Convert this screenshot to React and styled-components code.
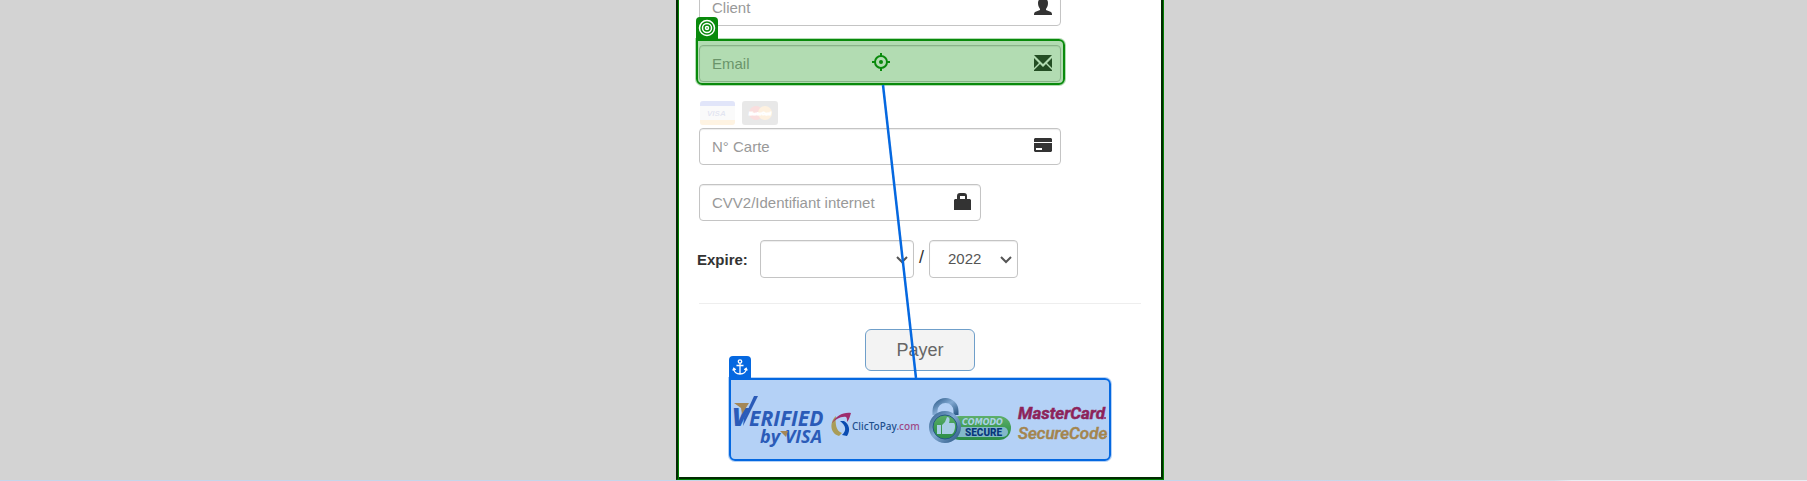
import React from "react";
import styled, { createGlobalStyle, css } from "styled-components";
import { Target } from "lucide-react";

const GREEN = "#098a0c";
const BLUE = "#0568e0";

const GlobalStyle = createGlobalStyle`
  *, *::before, *::after { box-sizing: border-box; }
  body {
    margin: 0;
    background: #d3d3d3;
    font-family: "Liberation Sans", Arial, sans-serif;
    font-size: 15px;
    color: #333;
  }
`;

const Page = styled.div`
  display: flex;
  flex-direction: column;
  overflow: hidden;
`;

const Stage = styled.main`
  display: flex;
  justify-content: center;
  padding-left: 33px;
`;

const Panel = styled.section`
  position: relative;
  display: flow-root;
  width: 100%;
  max-width: 488px;
  padding: 0 22px 18px 21px;
  background: #fff;
  border: solid #008000;
  border-width: 0 1px 1px 2px;
  border-left-color: #022b02;
  box-shadow: inset 1px 0 0 #008000, inset -2px -2px 0 #022b02;
`;

const Form = styled.form`
  display: flex;
  flex-direction: column;
  margin-top: -11px;
`;

const Field = styled.label`
  position: relative;
  display: flex;
  width: 100%;
  max-width: ${(p) => (p.$short ? 282 : 362)}px;
  margin-bottom: 19px;
`;

const control = css`
  width: 100%;
  border: 1px solid #c4c4c4;
  border-radius: 4px;
  background: #fff;
  box-shadow: inset 0 1px 1px rgba(0, 0, 0, 0.075);
  font: inherit;
  color: #555;
  outline: none;
`;

const TextInput = styled.input`
  ${control}
  height: 37px;
  padding: 0 42px 0 12px;
  &::placeholder { color: #999; opacity: 1; }
`;

const FieldIcon = styled.svg`
  position: absolute;
  right: 9px;
  top: 8px;
  width: 18px;
  height: 18px;
  fill: #333;
`;

const CardBrands = styled.div`
  display: flex;
  gap: 7px;
  margin-bottom: 3px;
  padding-left: 1px;
  svg { display: block; }
`;

const ExpiryRow = styled.div`
  display: flex;
  align-items: center;
  margin: 0 0 25px -2px;
`;

const ExpiryLabel = styled.label`
  width: 63px;
  font-weight: bold;
`;

const SelectBox = styled.div`
  position: relative;
  display: flex;
  width: ${(p) => (p.$wide ? 154 : 89)}px;
`;

const Select = styled.select`
  ${control}
  appearance: none;
  height: 38px;
  padding: 0 28px 2px 18px;
`;

const Chevron = styled.svg`
  position: absolute;
  right: 6px;
  top: 15px;
  width: 12px;
  height: 10px;
  fill: none;
  stroke: #555;
  stroke-width: 2;
  pointer-events: none;
`;

const Slash = styled.span`
  width: 15px;
  padding-bottom: 4px;
  text-align: center;
  font-size: 18px;
`;

const Divider = styled.hr`
  width: 100%;
  height: 1px;
  margin: 0 0 25px;
  border: 0;
  background: #eee;
`;

const PayButton = styled.button`
  align-self: center;
  width: 110px;
  height: 42px;
  padding: 0;
  border: 1px solid #6f9fca;
  border-radius: 6px;
  background: #f3f3f3;
  color: #666;
  font: inherit;
  font-size: 18px;
`;

const LogoStrip = styled.div`
  position: relative;
  margin: 7px 30px 0;
  height: 83px;
`;

const LogoArt = styled.svg`
  display: block;
  width: 100%;
  height: 83px;
`;

const Highlight = styled.div`
  position: absolute;
  inset: ${(p) => p.$inset || "0"};
  display: flex;
  align-items: center;
  justify-content: center;
  border: 2px solid ${(p) => p.$color};
  border-radius: 0 6px 6px 6px;
  background: ${(p) => p.$fill};
  box-shadow: 0 0 0 1px ${(p) => p.$fill};
  pointer-events: none;
`;

const Tab = styled.span`
  position: absolute;
  left: -2px;
  bottom: calc(100% + 2px);
  display: flex;
  align-items: center;
  justify-content: center;
  width: 22px;
  height: 22px;
  border-radius: 4px 4px 0 0;
  background: ${(p) => p.$color};
  color: #fff;
`;

const Connector = styled.svg`
  position: absolute;
  left: 0;
  top: 0;
  width: 100%;
  height: 100%;
  pointer-events: none;
`;

const BottomEdge = styled.footer`
  height: 1px;
  background: linear-gradient(90deg, #c6d6ea 70%, #d3dde6 86%, #e8eef4 87%);
`;

function AnchorIcon() {
  return (
    <svg width="16" height="16" viewBox="0 0 16 16" fill="none" stroke="#fff" strokeWidth="1.300">
      <circle cx="8" cy="2.500" r="1.700" />
      <path d="M8 4.200V15M4.500 6.500h7M1.700 9.500C2 13 4.500 15 8 15s6-2 6.300-5.500M.8 11.500l1-2.300 2 1.600M15.200 11.500l-1-2.300-2 1.600" />
    </svg>
  );
}

function VisaCard() {
  return (
    <svg width="35" height="24" opacity="0.12" aria-label="Visa">
      <rect width="35" height="24" rx="3" fill="#ddd" />
      <path d="M0 5V3a3 3 0 0 1 3-3h29a3 3 0 0 1 3 3v2z" fill="#1534d0" />
      <path d="M0 19h35v2a3 3 0 0 1-3 3H3a3 3 0 0 1-3-3z" fill="#f9a01b" />
      <text x="7" y="15" fontSize="8" fontWeight="bold" fontStyle="italic" fill="#1a2f8f">VISA</text>
    </svg>
  );
}

function MasterCardCard() {
  return (
    <svg width="36" height="24" opacity="0.14" aria-label="MasterCard">
      <rect width="36" height="24" rx="3" fill="#666" />
      <circle cx="14" cy="12" r="7" fill="#e21b1b" />
      <circle cx="23" cy="12" r="7" fill="#fba52a" />
      <text x="18" y="14" textAnchor="middle" fontSize="4" fontWeight="bold" fontStyle="italic" fill="#fff" stroke="#fff">MasterCard</text>
    </svg>
  );
}

function TrustLogos() {
  return (
    <LogoArt viewBox="0 0 382 83" preserveAspectRatio="xMidYMid meet" role="img" aria-label="Paiement sécurisé">
      <defs>
        <linearGradient id="steel" x1="0" y1="0" x2="1" y2="1">
          <stop offset="0" stopColor="#4d6570" />
          <stop offset="0.45" stopColor="#b9c8ce" />
          <stop offset="1" stopColor="#3c5560" />
        </linearGradient>
        <linearGradient id="leaf" x1="0" y1="0" x2="0" y2="1">
          <stop offset="0" stopColor="#84cf3a" />
          <stop offset="0.6" stopColor="#4fae10" />
          <stop offset="1" stopColor="#3c9d08" />
        </linearGradient>
      </defs>

      <g fontFamily='"Open Sans", sans-serif' fontWeight="800" fontStyle="italic" fill="#3c57a7">
        <text x="3" y="48" fontSize="25">V</text>
        <path d="M15 40 25 18h4L14 48z" />
        <path d="M5 25h15l-7 11-1-6z" fill="#e8951c" />
        <g fontWeight="700">
          <text x="20" y="48" fontSize="21">ERIFIED</text>
          <text x="31" y="65" fontSize="18">by VISA</text>
        </g>
        <path d="M51 53h8l-2 6z" fill="#e8951c" />
      </g>

      <path d="M107 38c-6 5-7 17 3 20l3-3c-6-2-7-9-6-17z" fill="#f0b41e" />
      <path d="M103 45c4-7 11-11 19-10-1 3-2 7-4 9 0-3 0-4-1-5-5-1-11 3-14 6z" fill="#e0153c" />
      <path d="M111 43c6 5 7 9 2 14l5 1c4-6 2-12-3-15z" fill="#0c3f9c" />
      <text x="123" y="52" fontFamily='"Noto Sans", sans-serif' fontSize="10" fontWeight="500" fill="#2c4668">
        ClicToPay<tspan fill="#e03a5c">.com</tspan>
      </text>

      <rect x="219" y="38" width="63" height="24" rx="12" fill="url(#leaf)" />
      <path d="M231 49h43a5 5 0 0 1 0 10h-46z" fill="#b9dcc0" />
      <path d="M206 37v-4a10 10 0 0 1 21 0v4" fill="none" stroke="url(#steel)" strokeWidth="5" />
      <circle cx="216" cy="49" r="14" fill="url(#leaf)" stroke="url(#steel)" strokeWidth="4" />
      <circle cx="216" cy="49" r="12" fill="none" stroke="#32535e" />
      <path d="M208 47h4v9h-4zM213 47l3-3 2-5c3 0 3 3 2 6h5c2 1 1 10-2 11h-10z" fill="#eefbe8" />
      <text x="233" y="47" fontFamily='"DejaVu Sans", sans-serif' fontSize="8" fontWeight="bold" fontStyle="italic" fill="#f2ffee">COMODO</text>
      <text x="236" y="58" fontFamily='Roboto, sans-serif' fontSize="10" fontWeight="900" fill="#0b2350">SECURE</text>

      <g fontFamily='Roboto, sans-serif' fontSize="17" fontWeight="900" fontStyle="italic">
        <text x="289" y="41" fontWeight="700" fill="#c80520" stroke="#c80520" strokeWidth="0.500">MasterCard</text>
        <text x="289" y="61" fontWeight="500" fill="#e8920c" stroke="#e8920c" strokeWidth="0.500">SecureCode</text>
      </g>
      <circle cx="376" cy="40" r="1" fill="#da0a20" />
      <path d="M375 58h3v1h-3z" fill="#f6a010" />
    </LogoArt>
  );
}

const CHEVRON = <path d="M1 2l5 5 5-5" />;

export default function App() {
  return (
    <>
      <GlobalStyle />
      <Page>
        <Stage>
          <Panel>
            <Form onSubmit={(e) => e.preventDefault()}>
              <Field>
                <TextInput type="text" placeholder="Client" aria-label="Client" />
                <FieldIcon viewBox="0 0 18 18">
                  <path d="M9 1c3 0 5 2 5 5 0 3-1 4-2 6v1l5 2c1 1 1 2 1 3H0c0-1 0-2 1-3l5-2v-1C5 10 4 9 4 6c0-3 2-5 5-5z" />
                </FieldIcon>
              </Field>
              <Field>
                <TextInput type="email" placeholder="Email" aria-label="Email" />
                <FieldIcon viewBox="0 0 18 18">
                  <path d="M0 2h18L9 11zM0 5l5 5-5 5zM18 5v10l-5-5zM0 18v-1l6-6 3 3 3-3 6 6v1z" />
                </FieldIcon>
                <Highlight $color={GREEN} $fill="rgba(0, 140, 0, 0.3)" $inset="-6px -4px -3px -3px">
                  <Tab $color={GREEN}><Target size={18} strokeWidth={2} /></Tab>
                  <svg width="18" height="18" viewBox="0 0 18 18" fill="none" stroke={GREEN} strokeWidth="2">
                    <circle cx="9" cy="9" r="6" />
                    <circle cx="9" cy="9" r="2" fill={GREEN} stroke="none" />
                    <path d="M9 0v4M9 14v4M0 9h4M14 9h4" />
                  </svg>
                </Highlight>
              </Field>
              <CardBrands>
                <VisaCard />
                <MasterCardCard />
              </CardBrands>
              <Field>
                <TextInput type="text" placeholder="N° Carte" aria-label="N° Carte" />
                <FieldIcon viewBox="0 0 18 18">
                  <path d="M1 2h16l1 1v3H0V3zM0 7h18v8l-1 1H1l-1-1zM2 12v2h6v-2z" fillRule="evenodd" />
                </FieldIcon>
              </Field>
              <Field $short>
                <TextInput type="text" placeholder="CVV2/Identifiant internet" aria-label="CVV2/Identifiant internet" />
                <FieldIcon viewBox="0 0 18 18">
                  <path d="M3 7V4c0-2 1-3 3-3h4c2 0 3 1 3 3v3h3l1 1v11H0V8l1-1zM6 7h5V4H6z" fillRule="evenodd" />
                </FieldIcon>
              </Field>
              <ExpiryRow>
                <ExpiryLabel htmlFor="month">Expire:</ExpiryLabel>
                <SelectBox $wide>
                  <Select id="month" defaultValue=""><option value="" /></Select>
                  <Chevron viewBox="0 0 12 10">{CHEVRON}</Chevron>
                </SelectBox>
                <Slash>/</Slash>
                <SelectBox>
                  <Select aria-label="Année" defaultValue="2022"><option>2022</option></Select>
                  <Chevron viewBox="0 0 12 10">{CHEVRON}</Chevron>
                </SelectBox>
              </ExpiryRow>
              <Divider />
              <PayButton type="submit">Payer</PayButton>
              <LogoStrip>
                <TrustLogos />
                <Highlight $color={BLUE} $fill="rgba(5, 104, 224, 0.3)">
                  <Tab $color={BLUE}><AnchorIcon /></Tab>
                </Highlight>
              </LogoStrip>
            </Form>
            <Connector>
              <line x1="205" y1="85" x2="238" y2="378" stroke={BLUE} strokeWidth="2.500" />
            </Connector>
          </Panel>
        </Stage>
        <BottomEdge />
      </Page>
    </>
  );
}
